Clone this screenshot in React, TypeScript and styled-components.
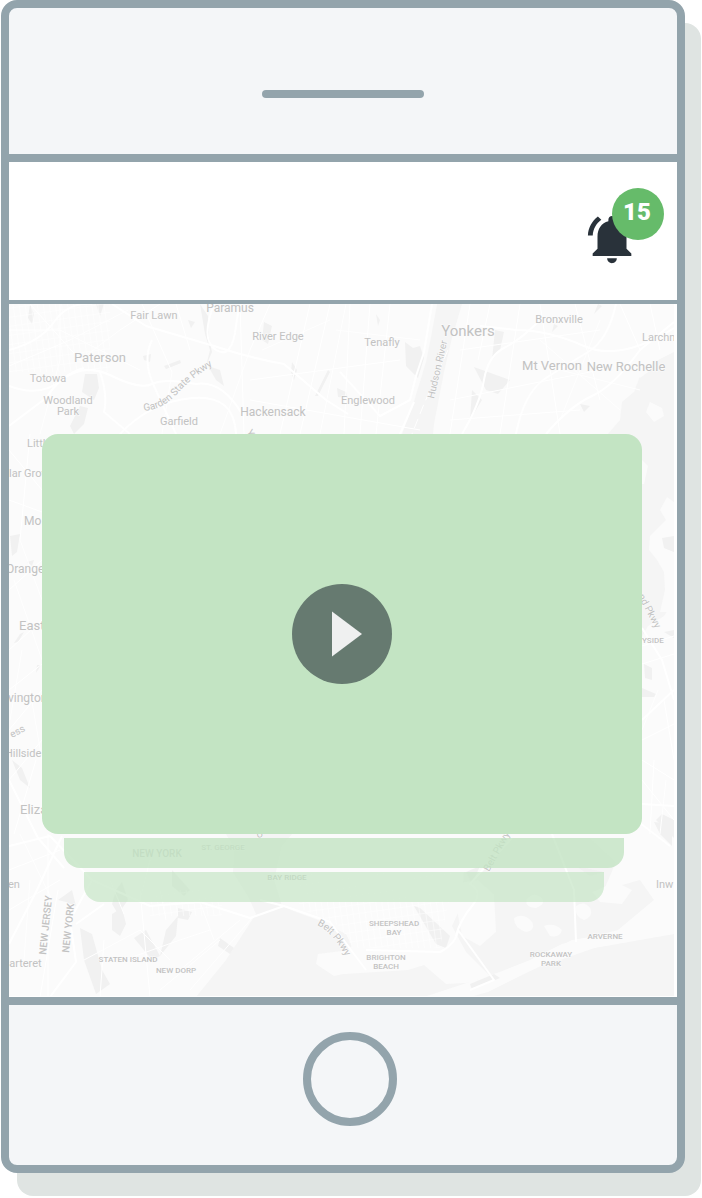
import React from "react";
import styled, { createGlobalStyle } from "styled-components";

const color = {
  frame: "#93a4ac",
  panel: "#f4f6f8",
  shadow: "#dfe4e2",
  badge: "#66bb6a",
  card: "#c3e4c3",
  ink: "#29323a",
  land: "#fbfbfb",
  water: "#f5f5f5",
  park: "#f1f1f1",
  label: "#c2c2c2",
};

const GlobalStyle = createGlobalStyle`
  *, *::before, *::after { box-sizing: border-box; }
  body { margin: 0; background: #fff; font-family: Roboto, "Liberation Sans", sans-serif; }
  button { padding: 0; font: inherit; cursor: pointer; }
`;

const Phone = styled.main`
  display: flex;
  flex-direction: column;
  margin: 0 17px 25px 1px;
  border: 8px solid ${color.frame};
  border-radius: 16px;
  background: ${color.panel};
  box-shadow: 16px 23px 0 ${color.shadow};
`;

const Earpiece = styled.div`
  display: flex;
  justify-content: center;
  padding: 82px 0 56px;
`;

const Speaker = styled.span`
  width: 162px;
  height: 8px;
  border-radius: 4px;
  background: ${color.frame};
`;

const AppBar = styled.header`
  display: flex;
  justify-content: flex-end;
  padding: 48px 36px 32px;
  border-top: 8px solid ${color.frame};
  border-bottom: 4px solid ${color.frame};
  background: #fff;
`;

const BellButton = styled.button`
  position: relative;
  width: 58px;
  height: 58px;
  border: 0;
  background: none;
  color: ${color.ink};

  svg { display: block; width: 100%; height: 100%; }
`;

const Badge = styled.span`
  position: absolute;
  top: -22px;
  left: 29px;
  width: 52px;
  height: 52px;
  padding-right: 2px;
  border-radius: 50%;
  background: ${color.badge};
  color: #fff;
  font-size: 24px;
  font-weight: 900;
  line-height: 48px;
  text-align: center;
`;

const MapView = styled.section`
  position: relative;
  padding: 130px 35px 95px 33px;
  border-bottom: 8px solid ${color.frame};
  background: #fff;
  overflow: hidden;
`;

const MapArt = styled.svg`
  position: absolute;
  inset: 0;
  width: 100%;
  height: 100%;
`;

const Stack = styled.div`
  position: relative;
  display: flex;
  flex-direction: column;
  gap: 4px;
`;

const VideoCard = styled.article`
  display: flex;
  align-items: center;
  justify-content: center;
  min-height: 400px;
  border-radius: 16px;
  background: ${color.card};
`;

const PlayButton = styled.button`
  display: flex;
  align-items: center;
  justify-content: center;
  width: 100px;
  height: 100px;
  border: 0;
  border-radius: 50%;
  background: #667a70;
  color: #eff0f0;
`;

const QueuedCard = styled.div<{ $depth: number }>`
  height: 30px;
  margin: 0 ${(p) => p.$depth * 20 - 2}px 0 ${(p) => p.$depth * 20 + 2}px;
  border-radius: 0 0 16px 16px;
  background: ${color.card};
  opacity: ${(p) => (p.$depth === 1 ? 0.8 : 0.66)};
`;

const HomeBar = styled.footer`
  display: flex;
  justify-content: center;
  padding: 27px 0 39px 13px;
`;

const HomeButton = styled.button`
  width: 94px;
  height: 94px;
  border: 8px solid ${color.frame};
  border-radius: 50%;
  background: transparent;
`;

type Label = [text: string, x: number, y: number, size: number, anchor?: "start", angle?: number];

const towns: Label[] = [
  ["Paramus", 230, 312, 12],
  ["Fair Lawn", 154, 319, 11],
  ["River Edge", 278, 340, 11],
  ["Paterson", 100, 362, 13],
  ["Totowa", 48, 382, 11],
  ["Woodland", 68, 404, 11],
  ["Park", 68, 415, 11],
  ["Garfield", 179, 425, 11],
  ["Hackensack", 273, 416, 12],
  ["Tenafly", 382, 346, 11],
  ["Englewood", 368, 404, 11],
  ["Yonkers", 468, 336, 15],
  ["Bronxville", 559, 323, 11],
  ["Larchn", 642, 341, 11, "start"],
  ["Mt Vernon", 552, 370, 13],
  ["New Rochelle", 626, 371, 13],
  ["Littl", 27, 447, 11, "start"],
  ["lar Grov", 9, 477, 11, "start"],
  ["Mo", 24, 525, 12, "start"],
  ["Orange", 6, 573, 12, "start"],
  ["East", 19, 630, 13, "start"],
  ["vingtor", 8, 702, 12, "start"],
  ["Hillside", 5, 757, 11, "start"],
  ["Eliza", 20, 814, 13, "start"],
  ["en", 8, 888, 11, "start"],
  ["Inw", 656, 888, 11, "start"],
  ["Carteret", 2, 967, 11, "start"],
  ["ess", 12, 738, 10, "start", -28],
  ["Hudson River", 434, 399, 10, "start", -77],
  ["nd Pkwy", 638, 596, 10, "start", 62],
  ["Belt Pkwy", 489, 872, 10, "start", -61],
  ["Y", 246, 432, 10, "start", 60],
  ["U", 257, 838, 10, "start", -10],
];

const districts: Label[] = [
  ["YSIDE", 642, 643, 8, "start"],
  ["NEW YORK", 157, 857, 10],
  ["ST. GEORGE", 223, 850, 8],
  ["BAY RIDGE", 287, 880, 8],
  ["NEW JERSEY", 46, 955, 10, "start", -84],
  ["NEW YORK", 69, 953, 10, "start", -84],
  ["STATEN ISLAND", 128, 962, 8],
  ["NEW DORP", 176, 973, 8],
  ["SHEEPSHEAD", 394, 926, 8],
  ["BAY", 394, 935, 8],
  ["BRIGHTON", 386, 960, 8],
  ["BEACH", 386, 969, 8],
  ["ARVERNE", 605, 939, 8],
  ["ROCKAWAY", 551, 957, 8],
  ["PARK", 551, 966, 8],
];

const water = [
  "M437 304L432 332L426 362L412 408L402 434V470H430L434 424L444 372L452 338L462 304Z",
  "M674 352L654 362L640 376L634 392L622 402L620 420L608 434V640H640L648 626L664 616L674 600Z",
  "M226 834L234 848L233 872L248 896L256 914L226 960L196 997H674V934L640 938L600 946L560 960L520 966L482 982L446 984L424 965L408 970L344 974L322 968L318 958L344 952L352 946L346 934L318 920L296 912L282 906L274 880L282 846L292 834Z",
  "M464 872L482 872L510 838H590L616 862L604 890L640 880L654 900L618 930L580 940L562 944L530 960L490 976L466 952L452 926L462 904Z",
];

const islands = [
  "M642 460L648 466L644 484H640Z",
  "M667 497L660 510L666 520L650 536L649 550L657 560L664 572L665 590L660 612H674V502Z",
  "M632 356L645 362L648 372L640 378L630 366Z",
  "M650 402L662 408L664 416L654 422L646 412Z",
  "M318 954L350 950L404 952L424 956L422 966L372 968L334 976L316 964Z",
  "M452 884L478 880L494 894L496 932L480 946L462 936Z",
  "M514 918q10 -6 18 4q4 8 -6 10q-12 -4 -12 -14z",
  "M526 900q8 -10 16 -2q4 6 -6 10q-10 0 -10 -8z",
  "M544 926q10 -4 18 4q-2 8 -12 6z",
  "M576 906q8 -6 14 2q4 8 -6 12q-10 -4 -8 -14z",
  "M592 892L616 882L632 890L622 904L600 902Z",
  "M424 997L500 972L536 958L572 940L608 934L674 924V934L606 946L570 952L520 976L488 992L470 997Z",
];

const parks = [
  "M85 374L97 374L99 388L94 400L88 396L82 392Z",
  "M80 406L88 408L84 424L74 434L70 426Z",
  "M30 304L34 314L32 324L28 318Z",
  "M96 304L104 304L100 316Z",
  "M188 320L195 322L191 328Z",
  "M264 322L272 326L268 344L262 340Z",
  "M143 356L151 354L150 362L144 360Z",
  "M164 366L180 360L181 363L166 369Z",
  "M200 304L208 316L209 338L212 352L206 366L210 350L205 334Z",
  "M208 366L220 370L224 386L216 380Z",
  "M292 362L297 370L294 380L291 372Z",
  "M328 370L330 372L318 396L315 396Z",
  "M337 388L346 392L348 398L338 397Z",
  "M405 342L413 348L420 346L424 358L418 378L406 366Z",
  "M376 314L380 320L378 326Z",
  "M495 330L504 332L500 350L492 360Z",
  "M474 367L510 380L498 394L486 390Z",
  "M472 390L482 400L470 420Z",
  "M554 324L558 326L552 332Z",
  "M598 304L602 306L594 314Z",
  "M580 404L590 406L584 412Z",
  "M10 536L20 534L17 552L12 556Z",
  "M27 562L34 560L32 566Z",
  "M20 634L24 632L18 642L14 643Z",
  "M37 665L41 665L36 673Z",
  "M12 760L22 768L30 788L20 780Z",
  "M644 664L652 668L652 680L645 678Z",
  "M642 688L656 694L654 697H642Z",
  "M662 538L674 536V552L664 548Z",
  "M664 632L674 630V638Z",
  "M656 820L662 814L674 820V838Z",
  "M172 870L190 890L184 896L172 886Z",
  "M112 904L116 890L122 882L128 900L118 914Z",
  "M80 928L92 934L102 970L110 984L96 994L84 960Z",
  "M112 914L122 908L126 924L120 936L112 930Z",
  "M134 938L146 930L160 956L152 960Z",
  "M166 930L178 916L176 936L160 956Z",
  "M178 908L192 912L188 920L178 918Z",
  "M220 938L234 948L230 954L218 946Z",
  "M58 900L72 890L76 906L66 902Z",
  "M414 906L420 908L450 936L446 948L436 944Z",
  "M466 872L480 866L472 884Z",
  "M576 866L604 872L590 876Z",
  "M654 822L672 824L672 846L660 834Z",
  "M470 984L494 974L500 978L472 990Z",
];

const highways = [
  "M9 350Q40 342 54 322T92 304",
  "M9 386Q40 398 62 380T112 376T152 384T196 384Q222 380 242 414",
  "M112 304L146 326L214 346Q250 358 284 364L326 400L348 414",
  "M214 304Q200 340 216 350T236 326T250 304",
  "M9 426L46 398Q62 374 84 368",
  "M100 372Q108 396 104 412L130 434",
  "M152 340Q142 360 154 386T176 434",
  "M120 434Q150 402 192 398T236 434",
  "M340 372L380 416L410 400L416 376L424 352L432 304",
  "M400 434L414 402",
  "M462 434Q480 404 484 380T504 348T538 322",
  "M480 326L516 330Q548 330 584 346T674 328",
  "M516 434Q524 392 546 378T588 352T616 304",
  "M546 434Q570 406 592 396T640 350L674 322",
  "M9 780L38 838L64 868",
  "M62 836L36 892L9 944",
  "M9 846L50 836L92 880L70 920L76 962L50 997",
  "M92 880L150 906L200 902L250 918L284 906L330 922L366 970",
  "M104 904L76 924",
  "M284 906L260 900",
  "M456 936Q460 920 472 906T470 884L486 866L512 838",
  "M366 950L440 952Q456 944 458 930L494 980L470 990",
  "M552 834L574 890L576 942",
  "M636 820L670 846",
  "M642 628L662 660L674 700",
  "M642 720L674 690",
  "M642 804L674 806",
];

const streets = [
  "M9 330H60L140 370M30 304L80 360L120 330L160 304M9 366L70 340L128 310M60 304V360L40 434M142 304L172 372L162 434M176 304L190 350M220 434L250 350L270 304M240 304L244 434M262 350L330 320M280 434L310 304M300 434L330 304M320 434L346 304M336 330L420 340M250 380L400 360M250 400L420 430M350 304L344 434M370 304L360 434M390 304L376 434",
  "M470 304L450 434M490 304L478 360M520 304L500 434M540 304L560 434M575 304L600 400M600 320L560 420M460 350L600 330M450 400L600 370M520 360L640 390M620 304L640 350M650 304L660 350M540 340L620 410M450 420L580 410",
  "M9 450L42 490M30 434L20 540L42 600M9 500L42 512M9 590L42 560M14 580L42 660M9 650L42 620M9 690L42 664M22 650L10 720M9 730L42 690M30 690L42 760M9 780L42 740M36 760L14 834",
  "M642 646L674 636M642 664L674 654M642 740L674 724M642 760L674 780M658 690L642 730M654 760L650 834M664 700L674 760M642 780L674 820M660 834L666 780",
  "M9 870L60 850M20 834L52 900M9 910L60 880M30 880L24 960M48 834V997M58 890L40 997M84 960L140 930L170 960M104 940L100 997M124 960L180 940L210 930M140 890L150 997M160 890L166 920M180 970L240 920M190 990L252 918M160 990L220 940M110 880L124 914M150 860L140 900M200 902L214 940",
];

const hatches = [
  "M292 872H456L448 904L440 948H352L340 926L300 908Z",
  "M9 304H110V372H9Z",
  "M150 890H222V916H150Z",
];

function Names({ items, weight }: { items: Label[]; weight: number }) {
  return (
    <g fontWeight={weight}>
      {items.map(([text, x, y, size, anchor, angle]) => (
        <text
          key={`${text}-${x}`}
          x={x}
          y={y}
          fontSize={size}
          textAnchor={anchor ?? "middle"}
          transform={angle ? `rotate(${angle} ${x} ${y})` : undefined}
        >
          {text}
        </text>
      ))}
    </g>
  );
}

function AreaMap() {
  return (
    <MapArt viewBox="9 304 668 693" preserveAspectRatio="xMidYMid slice" role="img" aria-label="Map of the New York area">
      <defs>
        <clipPath id="tile">
          <rect x="9" y="304" width="665" height="692" />
        </clipPath>
        <pattern id="blocks" width="6" height="9" patternUnits="userSpaceOnUse" patternTransform="rotate(-8)">
          <path d="M0 0H6M0 0V9" stroke="#fff" strokeWidth="1" fill="none" />
        </pattern>
        <path id="garden" d="M144 411Q164 409 178 393T220 361" />
        <path id="belt" d="M317 925Q336 934 350 966" />
      </defs>
      <g clipPath="url(#tile)">
        <rect x="9" y="304" width="665" height="692" fill={color.land} />
        <g fill={color.water}>{water.map((d) => <path key={d} d={d} />)}</g>
        <g fill={color.land}>{islands.map((d) => <path key={d} d={d} />)}</g>
        <g fill={color.park}>{parks.map((d) => <path key={d} d={d} />)}</g>
        <g fill="url(#blocks)">{hatches.map((d) => <path key={d} d={d} />)}</g>
        <g fill="none" stroke="#fff" strokeLinejoin="round">
          {streets.map((d) => <path key={d} d={d} strokeWidth="1" />)}
          {highways.map((d) => <path key={d} d={d} strokeWidth="2" />)}
          <path d="M448 350L424 404L412 434" strokeDasharray="10 5" />
        </g>
        <g fill={color.label} stroke="#fcfcfc" strokeWidth="1" paintOrder="stroke">
          <Names items={towns} weight={400} />
          <Names items={districts} weight={500} />
          <text fontSize="10"><textPath href="#garden">Garden State Pkwy</textPath></text>
          <text fontSize="10"><textPath href="#belt">Belt Pkwy</textPath></text>
        </g>
      </g>
    </MapArt>
  );
}

export default function App() {
  return (
    <>
      <GlobalStyle />
      <Phone>
        <Earpiece>
          <Speaker />
        </Earpiece>
        <AppBar>
          <BellButton type="button" aria-label="15 notifications">
            <svg viewBox="0 0 24 24" fill="currentColor" aria-hidden="true">
              <path d="M7.58 4.08L6.15 2.65C3.75 4.48 2.17 7.3 2.03 10.5h2c.15-2.65 1.51-4.97 3.55-6.42zM19.97 10.5h2c-.15-3.2-1.73-6.02-4.12-7.85l-1.42 1.43c2.02 1.45 3.39 3.77 3.54 6.42zM18 11c0-3.07-1.64-5.64-4.5-6.32V4c0-.83-.67-1.5-1.5-1.5s-1.5.67-1.5 1.5v.68C7.63 5.36 6 7.92 6 11v5l-2 2v1h16v-1l-2-2v-5zm-6 11c.14 0 .27-.01.4-.04.65-.14 1.18-.58 1.44-1.18.1-.24.15-.5.15-.78h-4c.01 1.1.9 2 2.01 2z" />
            </svg>
            <Badge>15</Badge>
          </BellButton>
        </AppBar>
        <MapView>
          <AreaMap />
          <Stack>
            <VideoCard>
              <PlayButton type="button" aria-label="Play">
                <svg width="40" height="46" viewBox="0 0 40 46" fill="currentColor" aria-hidden="true">
                  <path d="M10 .5L40 23L10 45.500Z" />
                </svg>
              </PlayButton>
            </VideoCard>
            <QueuedCard $depth={1} />
            <QueuedCard $depth={2} />
          </Stack>
        </MapView>
        <HomeBar>
          <HomeButton type="button" aria-label="Home" />
        </HomeBar>
      </Phone>
    </>
  );
}
